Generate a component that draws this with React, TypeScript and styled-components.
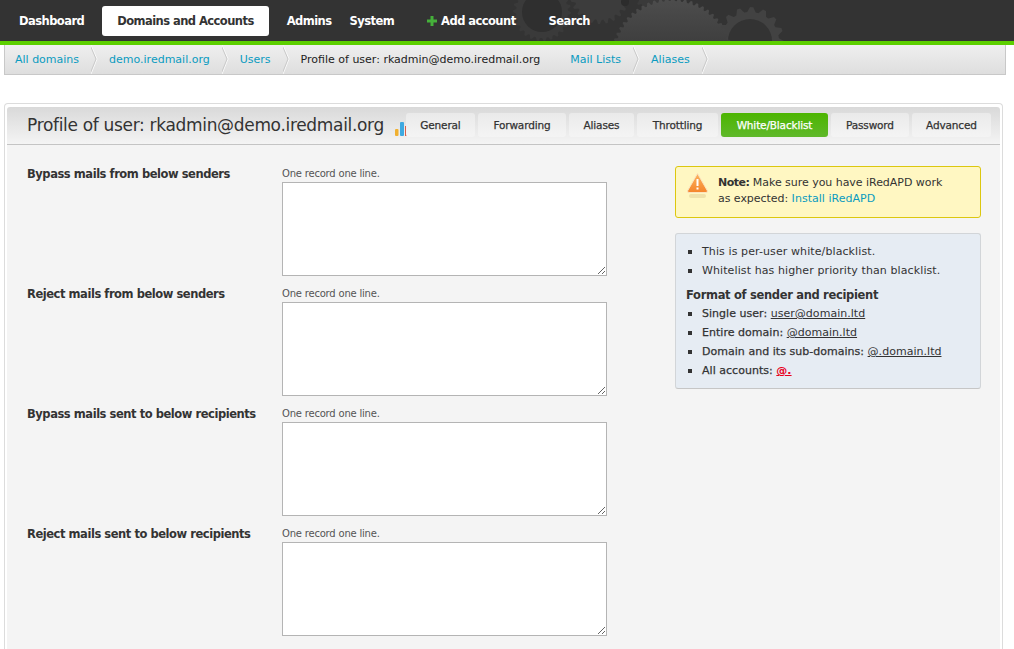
import React from 'react';
import styled, { createGlobalStyle } from 'styled-components';

const GlobalStyle = createGlobalStyle`
  html, body {
    margin: 0;
    padding: 0;
    background: #fff;
    height: 649px;
    overflow: hidden;
  }
  body {
    font-family: "DejaVu Sans", Verdana, sans-serif;
    font-size: 11px;
    color: #333;
  }
`;

const TopBar = styled.div`
  position: relative;
  height: 41px;
  background: #333;
  border-bottom: 4px solid #5ccf00;
  overflow: hidden;
`;

const Gears = styled.svg`
  position: absolute;
  left: 500px;
  top: 0;
`;

const NavList = styled.nav`
  position: relative;
  display: flex;
  align-items: center;
  gap: 18px;
  height: 41px;
  padding-left: 19px;
`;

const NavItem = styled.a<{ $active?: boolean; $boxed?: boolean }>`
  display: flex;
  align-items: center;
  gap: 4px;
  height: 30px;
  margin-top: 1px;
  padding: 0 ${(p) => (p.$boxed ? '15px' : '0')};
  border-radius: 3px;
  font-size: 11.5px;
  font-weight: bold;
  letter-spacing: -0.55px;
  white-space: nowrap;
  background: ${(p) => (p.$active ? '#fff' : 'transparent')};
  color: ${(p) => (p.$active ? '#333' : '#fff')};
`;

const Crumbs = styled.div`
  display: flex;
  height: 29px;
  margin: 0 8px 0 4px;
  background: linear-gradient(#efefef, #dedede);
  border: 1px solid #c8c8c8;
  border-top: 0;
`;

const Crumb = styled.a<{ $current?: boolean }>`
  position: relative;
  display: flex;
  align-items: center;
  padding: 0 20px 0 10px;
  font-size: 11px;
  letter-spacing: 0;
  white-space: nowrap;
  color: ${(p) => (p.$current ? '#222' : '#0a9bc0')};
`;

const Chevron = styled.svg`
  position: absolute;
  right: 0;
  top: 0;
`;

const Panel = styled.section`
  margin: 28px 11px 0 4px;
  padding: 3px 2px 0 2px;
  border: 1px solid #dcdcdc;
  border-bottom: 0;
  border-radius: 4px 4px 0 0;
  height: 546px;
  background: #fff;
`;

const PanelHead = styled.header`
  display: flex;
  align-items: flex-end;
  height: 37px;
  background: linear-gradient(#d9d9d9, #f4f4f4);
  border-bottom: 1px solid #c4c4c4;
  border-radius: 3px 3px 0 0;
`;

const Title = styled.h2`
  margin: 0 0 9px 20px;
  font-size: 17px;
  font-weight: normal;
  letter-spacing: -0.32px;
  color: #333;
  white-space: nowrap;
`;

const ChartIcon = styled.svg`
  margin: 0 -1px 7px 11px;
  flex: none;
`;

const Tabs = styled.div`
  position: relative;
  display: flex;
  gap: 3px;
`;

const Tab = styled.a<{ $active?: boolean; $width: number }>`
  display: flex;
  align-items: center;
  justify-content: center;
  box-sizing: border-box;
  width: ${(p) => p.$width}px;
  height: 24px;
  margin-bottom: 7px;
  border-radius: 3px;
  font-size: 10.5px;
  letter-spacing: -0.15px;
  -webkit-text-stroke: 0.25px;
  background: ${(p) =>
    p.$active ? 'linear-gradient(#4cb500, #5fb82a)' : 'linear-gradient(#eaeaea, #f4f4f4)'};
  color: ${(p) => (p.$active ? '#fff' : '#333')};
`;

const PanelBody = styled.div`
  display: flex;
  height: 508px;
  background: #f4f4f4;
`;

const FormColumn = styled.div`
  width: 668px;
  padding: 21px 0 0 20px;
  box-sizing: border-box;
`;

const FieldRow = styled.div`
  display: flex;
  height: 120px;
`;

const FieldLabel = styled.label`
  width: 255px;
  padding-top: 1px;
  font-size: 11.5px;
  font-weight: bold;
  letter-spacing: -0.45px;
  color: #333;
  white-space: nowrap;
`;

const FieldHint = styled.div`
  height: 16px;
  font-size: 10px;
  letter-spacing: -0.2px;
  color: #555;
  line-height: 16px;
`;

const FieldInput = styled.textarea`
  display: block;
  box-sizing: border-box;
  width: 325px;
  height: 94px;
  margin: 0;
  padding: 0;
  border: 1px solid #b4b4b4;
  border-radius: 0;
  background: #fff;
  outline: none;
`;

const SideColumn = styled.aside`
  width: 306px;
  padding-top: 21px;
`;

const NoteBox = styled.div`
  display: flex;
  box-sizing: border-box;
  height: 52px;
  padding: 5px 8px 0 10px;
  background: #fff7c2;
  border: 1px solid #dcc70f;
  border-radius: 3px;
  font-size: 11px;
  line-height: 16px;
  letter-spacing: -0.04px;
`;

const NoteIcon = styled.svg`
  flex: none;
  margin-right: 9px;
`;

const NoteText = styled.div`
  margin-top: 3px;
  white-space: nowrap;
  color: #333;
`;

const NoteLabel = styled.strong`
  letter-spacing: -0.5px;
`;

const Link = styled.a`
  color: #0a9bc0;
  letter-spacing: 0.03px;
`;

const HelpBox = styled.div`
  box-sizing: border-box;
  height: 156px;
  margin-top: 15px;
  padding: 8px 10px;
  background: #e6ecf3;
  border: 1px solid #d2d5d8;
  border-bottom-color: #c6c6c6;
  border-radius: 3px;
  font-size: 11px;
  letter-spacing: 0.1px;
  color: #333;
  white-space: nowrap;
`;

const HelpList = styled.ul`
  margin: 0;
  padding: 0;
  list-style: none;
`;

const HelpItem = styled.li<{ $medium?: boolean }>`
  position: relative;
  height: 19px;
  line-height: 19px;
  padding-left: 16px;
  letter-spacing: ${(p) => (p.$medium ? '0.03px' : '0.1px')};
  -webkit-text-stroke: ${(p) => (p.$medium ? '0.25px' : '0')};
  &::before {
    content: '';
    position: absolute;
    left: 2px;
    top: 8px;
    width: 4px;
    height: 4px;
    background: #333;
  }
`;

const HelpHeading = styled.h3`
  margin: 7px 0 1px;
  font-size: 11.5px;
  line-height: 16px;
  font-weight: bold;
  letter-spacing: -0.32px;
`;

const Sample = styled.span<{ $red?: boolean }>`
  text-decoration: underline;
  -webkit-text-stroke: 0;
  color: ${(p) => (p.$red ? '#e8001c' : '#333')};
  font-weight: ${(p) => (p.$red ? 'bold' : 'normal')};
`;

type GearProps = { cx: number; cy: number; r: number; teeth: number; depth: number; fill: string };

const GearShape = ({ cx, cy, r, teeth, depth, fill }: GearProps) => {
  const pts: string[] = [];
  for (let i = 0; i < teeth * 4; i++) {
    const a = (i / (teeth * 4)) * Math.PI * 2;
    const rad = i % 4 < 2 ? r : r - depth;
    pts.push(`${(cx + Math.cos(a) * rad).toFixed(1)},${(cy + Math.sin(a) * rad).toFixed(1)}`);
  }
  return <polygon points={pts.join(' ')} fill={fill} />;
};

const navItems = ['Dashboard', 'Domains and Accounts', 'Admins', 'System', 'Add account', 'Search'];
const crumbs = ['All domains', 'demo.iredmail.org', 'Users', 'Profile of user: rkadmin@demo.iredmail.org', 'Mail Lists', 'Aliases'];
const tabs = [
  { label: 'General', width: 69 },
  { label: 'Forwarding', width: 88 },
  { label: 'Aliases', width: 65 },
  { label: 'Throttling', width: 81 },
  { label: 'White/Blacklist', width: 107, active: true },
  { label: 'Password', width: 78 },
  { label: 'Advanced', width: 79 },
];
const fields = [
  'Bypass mails from below senders',
  'Reject mails from below senders',
  'Bypass mails sent to below recipients',
  'Reject mails sent to below recipients',
];

export default function App() {
  return (
    <>
      <GlobalStyle />
      <TopBar>
        <Gears width="300" height="41" viewBox="0 0 300 41">
          <defs>
            <linearGradient id="bigGear" x1="0" y1="0" x2="0" y2="1">
              <stop offset="0" stopColor="#4d4d4d" />
              <stop offset="0.65" stopColor="#333" />
            </linearGradient>
          </defs>
          <GearShape cx={42} cy={12} r={29} teeth={26} depth={3} fill="#3a3a3a" />
          <circle cx={42} cy={12} r={20} fill="#2f2f2f" />
          <GearShape cx={100} cy={-6} r={30} teeth={24} depth={4} fill="#3c3c3c" />
          <circle cx={125} cy={2} r={4} fill="#2c2c2c" />
          <GearShape cx={156} cy={-8} r={22} teeth={20} depth={3} fill="#3a3a3a" />
          <GearShape cx={250} cy={41} r={34} teeth={16} depth={5} fill="#424242" />
          <circle cx={250} cy={41} r={22} fill="#333" />
          <GearShape cx={172} cy={59} r={61} teeth={60} depth={3} fill="url(#bigGear)" />
        </Gears>
        <NavList>
          {navItems.map((item, i) => (
            <NavItem key={item} $active={i === 1} $boxed={i === 1 || item === 'Add account'}>
              {item === 'Add account' && (
                <svg width="10" height="10" viewBox="0 0 10 10">
                  <path d="M3.500 0h3v3.500H10v3H6.500V10h-3V6.500H0v-3h3.500z" fill="#45b03a" />
                </svg>
              )}
              {item}
            </NavItem>
          ))}
        </NavList>
      </TopBar>
      <Crumbs>
        {crumbs.map((c, i) => (
          <Crumb key={c} $current={i === 3}>
            {c}
            {i !== 3 && (
              <Chevron width="8" height="29" viewBox="0 0 8 29">
                <path d="M0 0 L6 14 L0 29" fill="none" stroke="#fafafa" strokeWidth="1" />
                <path d="M-1 0 L5 14 L-1 29" fill="none" stroke="#c9c9c9" strokeWidth="1" />
              </Chevron>
            )}
          </Crumb>
        ))}
      </Crumbs>
      <Panel>
        <PanelHead>
          <Title>Profile of user: rkadmin@demo.iredmail.org</Title>
          <ChartIcon width="12" height="16" viewBox="0 0 12 16">
            <rect x="0" y="8" width="3.500" height="7" rx="1" fill="#f0b030" />
            <rect x="5" y="1" width="4" height="14" rx="1" fill="#3fa9e0" />
            <rect x="10" y="5" width="2" height="10" fill="#d9604a" />
          </ChartIcon>
          <Tabs>
            {tabs.map((t) => (
              <Tab key={t.label} $active={t.active} $width={t.width}>
                {t.label}
              </Tab>
            ))}
          </Tabs>
        </PanelHead>
        <PanelBody>
          <FormColumn>
            {fields.map((f) => (
              <FieldRow key={f}>
                <FieldLabel>{f}</FieldLabel>
                <div>
                  <FieldHint>One record one line.</FieldHint>
                  <FieldInput />
                </div>
              </FieldRow>
            ))}
          </FormColumn>
          <SideColumn>
            <NoteBox>
              <NoteIcon width="23" height="27" viewBox="0 0 23 27">
                <defs>
                  <linearGradient id="warnFill" x1="0" y1="0" x2="0" y2="1">
                    <stop offset="0" stopColor="#fbb45e" />
                    <stop offset="1" stopColor="#f5852c" />
                  </linearGradient>
                </defs>
                <path d="M11.500 1.500 L21.500 19 Q21.500 20.500 20 20.500 H3 Q1.500 20.500 1.500 19 Z" fill="url(#warnFill)" stroke="#fbe3c0" strokeLinejoin="round" />
                <rect x="10.500" y="7" width="2" height="7" fill="#fff" />
                <rect x="10.500" y="15.500" width="2" height="2" fill="#fff" />
                <rect x="3" y="22" width="17" height="4" rx="2" fill="#efe2ab" />
              </NoteIcon>
              <NoteText>
                <NoteLabel>Note:</NoteLabel> Make sure you have iRedAPD work
                <br />
                as expected: <Link>Install iRedAPD</Link>
              </NoteText>
            </NoteBox>
            <HelpBox>
              <HelpList>
                <HelpItem>This is per-user white/blacklist.</HelpItem>
                <HelpItem>Whitelist has higher priority than blacklist.</HelpItem>
              </HelpList>
              <HelpHeading>Format of sender and recipient</HelpHeading>
              <HelpList>
                <HelpItem $medium>Single user: <Sample>user@domain.ltd</Sample></HelpItem>
                <HelpItem $medium>Entire domain: <Sample>@domain.ltd</Sample></HelpItem>
                <HelpItem $medium>Domain and its sub-domains: <Sample>@.domain.ltd</Sample></HelpItem>
                <HelpItem $medium>All accounts: <Sample $red>@.</Sample></HelpItem>
              </HelpList>
            </HelpBox>
          </SideColumn>
        </PanelBody>
      </Panel>
    </>
  );
}
